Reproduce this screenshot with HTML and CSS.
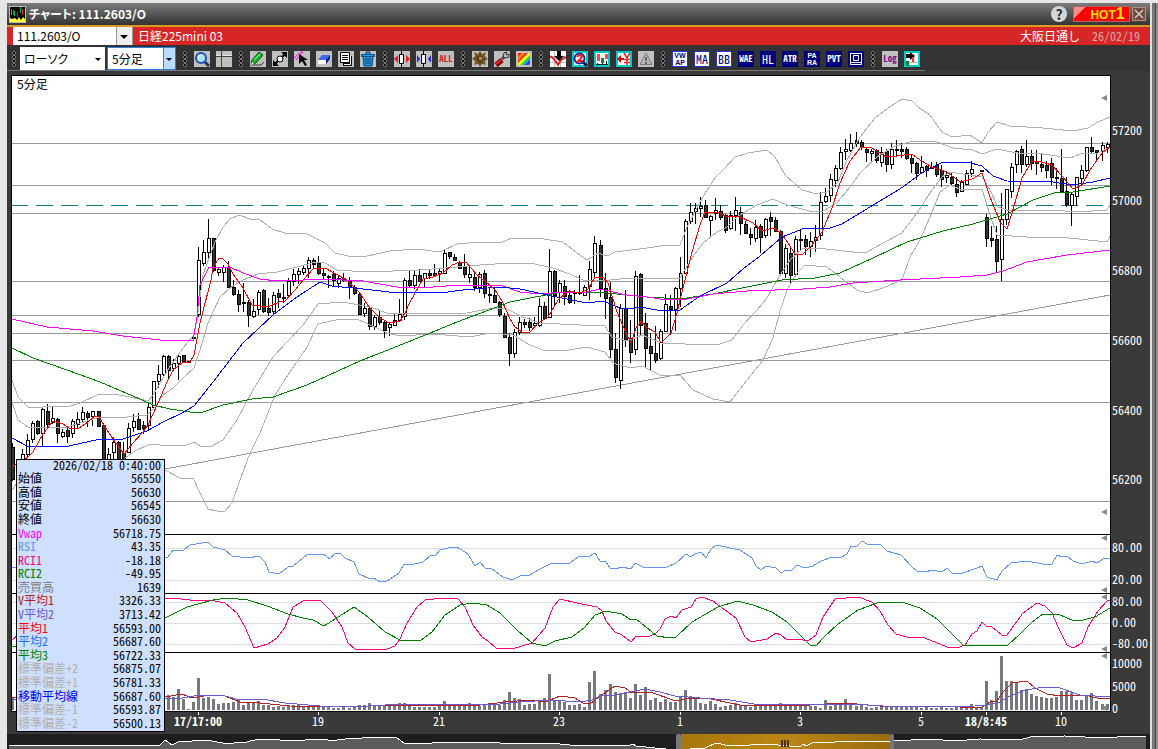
FILE: index.html
```html
<!DOCTYPE html>
<html lang="ja">
<head>
  <meta charset="UTF-8">
  <meta name="viewport" content="width=device-width, initial-scale=1.0">
  <title>チャート: 111.2603/O</title>
  <link rel="stylesheet" href="styles.css">
</head>
<body>
  <main class="window">
    <header class="titlebar">
      <svg class="app-icon" viewBox="0 0 17 17">
        <rect width="17" height="17" fill="#000"/>
        <path d="M2.500 3v6M5.500 5v5M11.500 1v6" stroke="#0c3"/>
        <path d="M4.500 4v5M8.500 6v5M13.500 3v6" stroke="#e22"/>
        <path d="M1 16v-4l2 1 3-1 2 2 2-3 2 3 2-3 2 2v3z" fill="#ff3"/>
        <rect x=".5" y=".5" width="16" height="16" fill="none" stroke="#bbb"/>
      </svg>
      <h1>チャート: 111.2603/O</h1>
      <button class="help" aria-label="ヘルプ">?</button>
      <button class="hot">HOT<b>1</b></button>
      <button class="close" aria-label="閉じる">
        <svg viewBox="0 0 12 12"><path d="M2 2l8 8M10 2l-8 8" stroke="#4a3a34" stroke-width="4"/><path d="M2 2l8 8M10 2l-8 8" stroke="#c9b5ac" stroke-width="2"/></svg>
      </button>
    </header>

    <div class="symbolbar">
      <label class="combo combo-symbol"><select aria-label="銘柄"><option>111.2603/O</option></select></label>
      <span class="name">日経225mini 03</span>
      <span class="session">大阪日通し</span>
      <span class="date">26/02/19</span>
    </div>

    <div class="toolrow">
      <nav class="toolbar">
        <i class="grip first"></i>
        <label class="combo combo-type"><select aria-label="足種"><option>ローソク</option></select></label>
        <label class="combo combo-span"><select aria-label="期間"><option>5分足</option></select></label>
        <i class="grip"></i>
        <div class="group">
          <button aria-label="拡大"><svg viewBox="0 0 16 16"><path d="M10 10l5 5" stroke="#236" stroke-width="3"/><circle cx="7" cy="7" r="5" fill="#aee4ff" stroke="#2350b8" stroke-width="2"/><path d="M4 7a3 3 0 0 1 3-3" stroke="#fff" fill="none"/></svg></button>
          <button aria-label="十字線"><svg viewBox="0 0 16 16"><path d="M0 5.500h16M5.500 0v16" stroke="#354a35"/><path d="M0 4.500h4M7 4.500h9" stroke="#e8e8e8"/></svg></button>
        </div>
        <i class="grip"></i>
        <div class="group">
          <button aria-label="ペン"><svg viewBox="0 0 16 16"><path d="M2 9l7-8 4 3-7 8-5 2z" fill="#1db32d" stroke="#075c10"/><path d="M4 9l6-6" stroke="#9f9"/><path d="M1 14h10l3-3" fill="none" stroke="#333"/><path d="M1 14l1-3 2 2z" fill="#fff"/></svg></button>
          <button aria-label="移動"><svg viewBox="0 0 16 16"><path d="M3 13L13 3" stroke="#000" stroke-width="2"/><path d="M1 15V9l6 6zM15 1v6L9 1z"/><circle cx="8" cy="8" r="3" fill="#fff" stroke="#000"/></svg></button>
          <button aria-label="選択"><svg viewBox="0 0 16 16"><path d="M0 7l8-7M2 9l7-8" stroke="#f0f"/><path d="M5 3v10l3-3 3 5 2-1-3-5h4z"/></svg></button>
          <button aria-label="消しゴム"><svg viewBox="0 0 16 16"><path d="M6 4h8l-4 5H2z" fill="#3b6cf0"/><path d="M14 4v4l-4 5V9z" fill="#001a9e"/><path d="M2 9h8v4H2z" fill="#fff"/></svg></button>
          <button aria-label="コピー"><svg viewBox="0 0 16 16"><path d="M5 5h9v10H5z" fill="#000"/><path d="M2.500 1.500h9v10h-9z" fill="#fff" stroke="#000"/><path d="M4 4.500h6M4 6.500h6M4 8.500h6" stroke="#000"/><path d="M12.500 5v8.500H6" fill="none" stroke="#fff"/></svg></button>
          <button aria-label="削除"><svg viewBox="0 0 16 16"><path d="M3 5h10l-1 10H4z" fill="#1e90d8" stroke="#0a4a80"/><path d="M1.500 3.500h13v2h-13zM6 3V1h4v2" fill="#2ba0e8" stroke="#0a4a80"/><path d="M6 7v6M8 7v6M10 7v6" stroke="#0a4a80"/></svg></button>
        </div>
        <i class="grip"></i>
        <div class="group">
          <button aria-label="間隔を広げる"><svg viewBox="0 0 16 16"><path d="M7.500 0v16" stroke="#000"/><path d="M5.500 3.500h4v9h-4z" fill="#fff" stroke="#000"/><path d="M0 8l4-4v8zM16 8l-4-4v8z" fill="#e02020"/></svg></button>
          <button aria-label="間隔を狭める"><svg viewBox="0 0 16 16"><path d="M7.500 0v16" stroke="#000"/><path d="M5.500 3.500h4v9h-4z" fill="#fff" stroke="#000"/><path d="M4 8L1 4v8zM12 8l3-4v8z" fill="#2828e8"/></svg></button>
          <button class="txt red">ALL</button>
        </div>
        <i class="grip"></i>
        <div class="group">
          <button aria-label="設定"><svg viewBox="0 0 16 16"><path d="M8 0l2 3 4-2-1 4 3 3-3 2 1 4-4-1-2 3-2-3-4 1 1-4-3-2 3-3-1-4 4 2z" fill="#7c5a2a"/><path d="M3 8h10M8 3v10M5 5l6 6M11 5l-6 6" stroke="#2c2418"/><path d="M7 6h3v3H7z" fill="#b58a45"/></svg></button>
          <button aria-label="ツール"><svg viewBox="0 0 16 16"><path d="M8 8l4-4" stroke="#444" stroke-width="3"/><path d="M10 2l-1 3 2 2 4-1 0-3-2 1-1-1 1-2z" fill="#bbb" stroke="#333"/><path d="M2 14l6-5" stroke="#7a0000" stroke-width="5"/><path d="M2 13l5-4" stroke="#f22" stroke-width="2"/></svg></button>
          <button aria-label="配色"><svg viewBox="0 0 16 16"><path d="M2 2h12v12H2z" fill="#f0f"/><path d="M2 14V2h9z" fill="#e22"/><path d="M14 2v3l-9 9H2v-2L12 2z" fill="#ff0"/><path d="M14 4v3l-7 7H4z" fill="#2d2"/><path d="M14 6v4l-4 4H7z" fill="#1af"/><path d="M14 9v3l-2 2H9z" fill="#33f"/><path d="M2 10V6l4-4h3z" fill="#f80"/></svg></button>
        </div>
        <i class="grip"></i>
        <div class="group">
          <button aria-label="予測"><svg viewBox="0 0 16 16"><path d="M0 0h16v16H0z" fill="#fff"/><path d="M4.500 0v16M10.500 0v16M0 5.500h16M0 11.500h16" stroke="#bbb"/><path d="M0 5l4 3 4 6 3-5 5-3" fill="none" stroke="#d22" stroke-width="2"/><path d="M7 0h4v5h3l-5 5-5-5h3z"/></svg></button>
          <button aria-label="検索2"><svg viewBox="0 0 16 16"><path d="M1 1h14v14H1z" fill="#fff" stroke="#0cc" stroke-width="2"/><path d="M11 11l4 4" stroke="#115" stroke-width="3"/><circle cx="7.500" cy="7.500" r="5" fill="#fff" stroke="#229" stroke-width="2"/><path d="M5 6q2-3 5-1 0 2-4 5h5" fill="none" stroke="#e22" stroke-width="2"/></svg></button>
          <button aria-label="比較"><svg viewBox="0 0 16 16"><path d="M1 1h14v14H1z" fill="#fff" stroke="#0cc" stroke-width="2"/><path d="M3 3h3v7H3zM11 3h3v5h-3z" fill="#f44"/><path d="M7 7h3v5H7z" fill="#083"/><path d="M2 13.500h12" stroke="#222"/><path d="M3.500 12v2M8.500 12v2M12.500 10v4" stroke="#222"/></svg></button>
          <button aria-label="発注"><svg viewBox="0 0 16 16"><path d="M1 1h14v14H1z" fill="#fff" stroke="#0cc" stroke-width="2"/><path d="M1 8l4-4v3h3v2H5v3z" fill="#c00"/><path d="M8 2l3 5 3-5M11 7v7M8 8.500h6M8 11.500h6" stroke="#e22" stroke-width="1.500" fill="none"/></svg></button>
          <button aria-label="警告" disabled><svg viewBox="0 0 16 16"><path d="M8 2l6 11.500H2z" fill="#b4b4b4" stroke="#7c7c7c"/><path d="M8 6v4M8 11v2" stroke="#666" stroke-width="2"/></svg></button>
        </div>
        <i class="grip"></i>
        <div class="group">
          <button class="txt on two">VW<br>AP</button>
          <button class="txt on big">MA</button>
          <button class="txt on big">BB</button>
          <button class="txt navy">WAE</button>
          <button class="txt navy big">HL</button>
          <button class="txt navy">ATR</button>
          <button class="txt navy two">PA<br>RA</button>
          <button class="txt navy">PVT</button>
          <button class="txt navy" aria-label="枠"><svg viewBox="0 0 16 16"><path d="M2.500 2.500h11v11h-11zM2.500 11.500h11M5.500 4.500h5v5h-5z" fill="none" stroke="#fff"/></svg></button>
        </div>
        <i class="grip"></i>
        <div class="group">
          <button class="txt purple">Log</button>
          <button aria-label="配置"><svg viewBox="0 0 16 16"><path d="M1 1h14v14H1z" fill="#fff" stroke="#0cc" stroke-width="2"/><path d="M10 3v8M2 11.500h12" stroke="#bbb"/><path d="M2 3h4V1l5 4-5 4V7H2z"/><path d="M8 6h2v5H8z" fill="#e33"/><path d="M2 10h3v5H2z" fill="#083"/></svg></button>
        </div>
      </nav>
    </div>

    <section class="chart">
      <div class="panel price">
        <div class="plot"><svg id="price" viewBox="12 76 1098 458" preserveAspectRatio="none"></svg><span class="caption">5分足</span></div>
        <div class="yaxis" id="priceAxis"></div>
      </div>
      <div class="panel sub">
        <div class="plot"><svg id="rsi" viewBox="12 535 1098 58" preserveAspectRatio="none"></svg></div>
        <div class="yaxis" id="rsiAxis"></div>
      </div>
      <div class="panel sub">
        <div class="plot"><svg id="rci" viewBox="12 594 1098 58" preserveAspectRatio="none"></svg></div>
        <div class="yaxis" id="rciAxis"></div>
      </div>
      <div class="panel sub">
        <div class="plot"><svg id="volume" viewBox="12 653 1098 58" preserveAspectRatio="none"></svg></div>
        <div class="yaxis" id="volumeAxis"></div>
      </div>
      <div class="xaxis" id="timeAxis"></div>

      <table class="readout">
        <thead><tr><th colspan="2">2026/02/18 0:40:00</th></tr></thead>
        <tbody>
          <tr><th>始値</th><td>56550</td></tr>
          <tr><th>高値</th><td>56630</td></tr>
          <tr><th>安値</th><td>56545</td></tr>
          <tr><th>終値</th><td>56630</td></tr>
          <tr class="c-vwap"><th>Vwap</th><td>56718.75</td></tr>
          <tr class="c-rsi"><th>RSI</th><td>43.35</td></tr>
          <tr class="c-rci1"><th>RCI1</th><td>-18.18</td></tr>
          <tr class="c-green"><th>RCI2</th><td>-49.95</td></tr>
          <tr class="c-volume"><th>売買高</th><td>1639</td></tr>
          <tr class="c-v1"><th>V平均1</th><td>3326.33</td></tr>
          <tr class="c-v2"><th>V平均2</th><td>3713.42</td></tr>
          <tr class="c-ma1"><th>平均1</th><td>56593.00</td></tr>
          <tr class="c-ma2"><th>平均2</th><td>56687.60</td></tr>
          <tr class="c-green"><th>平均3</th><td>56722.33</td></tr>
          <tr class="c-band"><th>標準偏差+2</th><td>56875.07</td></tr>
          <tr class="c-band"><th>標準偏差+1</th><td>56781.33</td></tr>
          <tr class="c-mid"><th>移動平均線</th><td>56687.60</td></tr>
          <tr class="c-band"><th>標準偏差-1</th><td>56593.87</td></tr>
          <tr class="c-band"><th>標準偏差-2</th><td>56500.13</td></tr>
        </tbody>
      </table>
    </section>

    <footer class="navigator"><svg id="navigator" viewBox="9 734 1141 15" preserveAspectRatio="none"></svg></footer>
  </main>
  <div class="edge"></div>
  <script src="script.js"></script>
</body>
</html>
```
FILE: styles.css
```css
* { box-sizing: border-box; }
body {
  margin: 0;
  height: 100vh;
  display: flex;
  padding: 3px 0 0 7px;
  overflow: hidden;
  background: #e6e6e6;
  font-family: "Noto Sans CJK JP", sans-serif;
  font-size: 12px;
  line-height: 14px;
}
button, select { font: inherit; }
button { padding: 0; border: 0; flex: none; }
svg { display: block; }

.window {
  flex: 1;
  min-width: 0;
  display: flex;
  flex-direction: column;
  background: #3a3a3a;
}
.edge {
  width: 8px;
  border-left: 2px solid #e0e0e0;
  background: linear-gradient(90deg, #777 0 3px, #444 3px 4px, #909090 4px);
}

/* title bar */
.titlebar {
  height: 24px;
  display: flex;
  align-items: center;
  padding: 0 4px 0 2px;
  background: linear-gradient(#7c7c7c, #565656 50%, #343434);
  border-bottom: 2px solid #d99a22;
  color: #fff;
}
.app-icon { width: 17px; height: 17px; }
h1 { flex: 1; margin: 0 0 0 3px; font-size: 12px; line-height: 16px; font-feature-settings: "palt"; }
.help {
  width: 16px;
  height: 16px;
  border-radius: 50%;
  background: #d2d6d8;
  color: #234;
  font-weight: bold;
  font-size: 14px;
  line-height: 16px;
}
.hot {
  width: 57px;
  height: 16px;
  margin: 0 2px 0 6px;
  padding-left: 12px;
  border: 1px solid #a66;
  background: linear-gradient(135deg, #ff8a80 0 8px, #f00 8px);
  color: #e8e000;
  font-family: "Liberation Sans", sans-serif;
  font-size: 12px;
  font-weight: bold;
  line-height: 14px;
}
.hot b { font-size: 16px; }
.close { width: 14px; height: 14px; background: #80503e; border: 1px solid #b89080; }

/* symbol bar */
.symbolbar {
  height: 18px;
  display: flex;
  align-items: center;
  padding: 0 10px 0 6px;
  background: #d82626;
  color: #fff;
}
.name { flex: 1; padding-left: 5px; }
.session { margin-right: 12px; }
.date { color: #dba8a8; font-feature-settings: "hwid"; }

.combo { position: relative; display: block; height: 100%; }
.combo select {
  display: block;
  width: 100%;
  height: 100%;
  padding: 0 0 0 4px;
  border: 0;
  border-radius: 0;
  outline: 0;
  appearance: none;
  background: #fff;
  color: #000;
  font-feature-settings: "palt";
}
.combo::after {
  content: "";
  position: absolute;
  right: 4px;
  top: 50%;
  margin-top: -1px;
  border: 3px solid transparent;
  border-top-color: #000;
  border-bottom: 0;
  pointer-events: none;
}
.combo-symbol { width: 120px; }
.combo-symbol select { background: linear-gradient(270deg, #999 0 1px, #eee 1px 16px, #999 16px 17px, #fff 17px); }
.combo-symbol::after { right: 5px; border-width: 4px 4px 0; }
.combo-type { width: 85px; margin-right: 2px; }
.combo-span { width: 69px; }
.combo-span select { border: 1px solid #2a80d8; background: linear-gradient(270deg, #b8dcff 0 11px, #2a80d8 11px 12px, #fff 12px); }

/* tool bar */
.toolrow { height: 30px; display: flex; background: #333; border-bottom: 4px solid #3a3a3a; }
.toolbar {
  display: flex;
  align-items: center;
  padding: 2px 5px 0 0;
  border-bottom: 1px solid #777;
}
.toolbar .combo { height: 23px; }
.group { display: flex; gap: 6px; }
.grip {
  width: 6px;
  height: 16px;
  margin: 0 6px;
  background: radial-gradient(circle at 3px 2px, #0c0c0c 1px, #777 1px 2px, transparent 2px) 0 0 / 6px 4px;
}
.grip.first { margin: 0 3px 0 4px; }
.group button { width: 16px; height: 16px; background: #c0c0c0; overflow: hidden; }
.group svg { width: 16px; height: 16px; }
.group .txt {
  font-size: 9px;
  line-height: 16px;
  font-weight: bold;
  font-feature-settings: "hwid";
  text-align: center;
  white-space: nowrap;
}
.group .big { font-size: 12px; font-weight: normal; }
.group .two { font: bold 7px/7px "Liberation Sans", sans-serif; }
.group .red { color: #e01818; }
.group .navy { background: #00007c; color: #fff; }
.group .on { background: #fff; color: #000070; box-shadow: inset 0 0 0 1px #2233dd; }
.group .purple { color: #80008c; }

/* chart */
.chart {
  position: relative;
  flex: 1;
  min-height: 0;
  display: flex;
  flex-direction: column;
  padding-left: 4px;
}
.panel { display: flex; min-height: 0; flex: 59 1 0; }
.price { flex-grow: 460; }
.plot {
  position: relative;
  flex: 1;
  min-width: 0;
  background: #fff;
  border: 1px solid #000;
  border-top: 0;
}
.price .plot { border-top: 1px solid #000; }
.plot svg { width: 100%; height: 100%; }
.plot::before, .plot::after {
  content: "";
  position: absolute;
  right: 3px;
  top: 0;
  border: 3px solid transparent;
  border-left: 0;
  border-right: 6px solid #888;
}
.plot::after { top: auto; bottom: 0; }
.price .plot::before { top: 19px; }
.price .plot::after { bottom: 19px; }
.caption { position: absolute; left: 5px; top: 1px; font-feature-settings: "palt"; }

.yaxis { position: relative; width: 39px; }
.yaxis span {
  position: absolute;
  left: 1px;
  padding-bottom: 2px;
  transform: translateY(-50%);
  color: #fff;
  font-feature-settings: "hwid";
}
.xaxis { position: relative; height: 22px; margin: 0 40px 0 1px; }
.xaxis span {
  position: absolute;
  top: 0;
  padding-top: 2px;
  transform: translateX(-50%);
  color: #fff;
  font-feature-settings: "hwid";
}
.xaxis span::before { content: ""; position: absolute; left: 50%; top: 0; height: 3px; border-left: 1px solid #fff; }
.xaxis .day { font-weight: bold; }

/* value read-out over the chart */
.readout {
  position: absolute;
  left: 9px;
  bottom: 2px;
  width: 149px;
  height: 273px;
  border: 1px solid #000;
  border-collapse: separate;
  border-spacing: 0;
  background: #cfdffe;
  font-feature-settings: "hwid";
  line-height: 9px;
}
.readout th, .readout td { padding: 0 3px 4px 1px; font-weight: normal; text-align: left; white-space: nowrap; }
.readout td, .readout thead th { text-align: right; color: #000; }
.c-vwap { color: #ff00ff; }
.c-rsi { color: #6495ed; }
.c-rci1 { color: #ff0080; }
.c-green { color: #008000; }
.c-volume { color: #808080; }
.c-v1 { color: #b22222; }
.c-v2 { color: #6a5acd; }
.c-ma1 { color: #ff0000; }
.c-ma2 { color: #1e6eff; }
.c-mid { color: #0000ff; }
.c-band { color: #b0b0b0; }

.navigator { height: 15px; padding-left: 2px; background: #1e1e1e; }
.navigator svg { width: 100%; height: 100%; }
```
FILE: script.js
```js
// one row per 5 minute bar: high, body top, body bottom, low, 1 = falling
const candles = [
  [443,447,479,481,1],[462,465,475,480,0],[449,454,462,465,0],[434,440,454,458,0],[421,423,439,443,0],
  [420,421,433,435,1],[407,409,433,446,0],[404,411,424,429,1],[406,418,422,424,0],[418,419,433,443,1],
  [429,432,436,438,0],[426,430,436,443,1],[419,421,433,438,0],[412,419,424,429,0],[407,412,419,423,0],
  [411,413,417,427,1],[411,411,416,426,0],[411,411,426,427,1],[423,425,462,465,1],[448,454,463,465,0],
  [437,442,452,461,0],[441,442,459,462,1],[442,453,458,461,1],[423,428,452,453,0],[414,421,427,432,0],
  [413,419,429,430,1],[421,425,428,434,1],[402,407,425,431,0],[381,381,407,408,0],[365,374,381,388,0],
  [355,356,374,376,0],[355,356,370,379,1],[359,363,368,371,0],[355,356,363,380,0],[355,355,361,362,1],
  [361,361,362,363,1],[337,337,338,338,1],
  [247,260,314,317,0],[240,252,263,266,0],[219,238,252,258,0],[238,238,270,272,1],[267,269,272,276,0],
  [265,267,272,282,0],[261,267,287,288,1],[280,287,294,296,1],[290,294,304,312,1],[283,302,303,312,1],
  [300,302,315,327,1],[299,311,316,318,0],[290,292,309,315,0],[289,290,311,313,1],[298,308,312,316,1],
  [292,295,311,315,0],[289,293,297,308,1],[284,297,298,303,0],[278,281,295,296,0],[269,274,281,286,0],
  [268,271,274,284,0],[265,268,272,275,0],[257,260,268,278,0],[258,260,264,268,1],[256,263,273,275,1],
  [268,273,275,280,1],[275,276,277,288,0],[271,274,280,286,1],[275,278,283,288,0],[273,278,280,282,1],
  [277,280,287,299,1],[285,287,293,295,1],[292,294,314,315,1],[303,308,313,317,0],[306,308,326,330,1],
  [315,317,326,330,0],[311,317,322,325,1],[321,322,330,338,1],[323,324,327,336,0],[314,320,325,326,0],
  [299,314,320,322,0],[278,280,316,320,0],[271,280,285,287,1],[271,275,285,289,0],[269,275,281,282,1],
  [273,273,278,287,0],[269,273,275,279,1],[264,273,275,277,1],[268,271,273,282,0],[250,253,273,274,0],
  [252,252,256,259,1],[254,257,260,261,1],[261,262,268,269,1],[254,267,274,278,1],[265,274,277,283,0],
  [273,277,287,291,1],[272,274,287,293,0],[270,273,293,298,1],[287,294,295,303,0],[288,295,302,303,1],
  [301,302,314,317,1],[313,316,337,338,1],[333,337,353,366,1],[329,332,353,358,0],[317,322,332,335,0],
  [319,322,324,328,1],[318,322,327,331,1],[317,323,325,328,0],[298,306,325,327,0],[302,306,318,320,1],
  [249,271,317,318,0],[270,271,295,305,1],[280,283,292,303,0],[280,286,296,305,1],[290,295,302,304,1],
  [290,292,293,304,0],[275,292,293,295,0],[285,287,295,296,0],[261,269,286,300,0],[236,243,272,277,0],
  [240,245,288,297,1],[273,288,298,319,1],[282,297,349,358,1],[333,349,377,383,1],[304,308,380,389,0],
  [290,308,339,347,1],[320,338,352,363,1],[271,276,349,355,0],[273,274,325,335,1],[313,323,348,367,1],
  [333,346,353,371,1],[326,353,360,363,1],[329,331,358,360,0],[294,304,331,332,0],[295,306,309,335,1],
  [287,288,309,331,0],[257,273,288,307,0],[219,221,273,274,0],[203,212,221,224,0],[203,208,211,224,0],
  [197,206,208,217,0],[200,205,217,218,1],[215,216,220,237,0],[198,210,213,220,0],[205,211,217,220,1],
  [214,215,230,233,1],[211,215,228,230,0],[197,210,215,231,0],[207,212,223,235,1],[221,224,233,234,1],
  [228,234,237,245,1],[220,227,238,242,0],[224,226,237,253,1],[218,219,235,238,0],[212,217,221,236,1],
  [217,220,231,232,1],[230,231,273,274,1],[244,248,273,278,0],[247,253,275,285,1],[236,239,274,276,0],
  [230,239,240,250,0],[235,239,246,255,1],[232,241,246,257,0],[225,237,240,252,0],[192,202,235,240,0],
  [188,196,201,203,0],[174,179,195,202,0],[165,168,180,187,0],[147,152,168,170,0],[139,149,151,160,0],
  [134,143,150,152,0],[132,140,143,147,1],[140,142,147,150,1],[147,149,152,162,1],[149,151,153,162,0],
  [149,150,160,163,1],[147,152,162,167,0],[149,151,164,172,1],[143,149,164,169,0],[140,149,150,156,0],
  [143,149,151,158,1],[147,149,158,160,1],[155,158,163,173,1],[162,163,173,180,1],[156,167,172,173,0],
  [165,166,170,177,1],[162,167,168,168,0],[162,165,174,177,1],[165,170,179,187,1],[171,175,177,183,0],
  [173,177,183,185,1],[177,184,192,197,1],[180,182,191,192,0],[170,173,184,185,0],[161,169,173,177,0],
  null,[170,170,171,171,1],[214,217,238,247,1],[226,238,240,247,1],[226,239,261,272,1],[193,219,259,281,0],
  [189,189,219,225,0],[163,167,191,198,0],[150,151,164,173,0],[146,149,164,173,1],[140,156,164,167,0],
  [150,156,163,170,1],[150,161,163,175,1],[153,164,167,172,1],[161,165,170,178,1],[158,163,177,185,1],
  [168,177,178,189,0],[149,178,191,192,1],[177,191,204,207,1],[192,194,205,226,0],[177,177,196,206,0],
  [165,170,178,185,0],[147,147,170,172,0],[137,147,151,153,1],[150,150,152,162,1],[142,145,151,161,0],
  [142,144,147,153,0]
];

// bar heights, starting at bar -37 like the candles
const volumes = [12,9,6,5,7,9,12,8,6,5,4,7,8,6,5,6,7,10,12,9,8,7,6,9,8,6,5,9,12,14,
  13,15,13,21,11,1,8,
  32,12,13,11,6,7,7,8,11,5,8,8,9,5,5,3,4,3,5,5,5,4,3,3,5,4,3,2,2,3,2,3,5,5,7,4,5,5,5,4,7,7,5,3,3,3,3,3,4,9,5,4,5,
  5,7,5,4,5,5,5,5,10,18,12,11,5,6,6,8,12,36,10,10,8,5,5,6,3,28,39,16,20,26,18,17,18,12,26,15,23,10,12,8,11,8,8,13,20,
  14,11,7,6,9,6,3,4,5,7,5,4,3,4,5,4,6,4,7,4,5,4,5,5,4,4,2,10,4,5,7,11,6,4,5,3,2,3,4,3,3,3,4,3,4,3,2,3,2,2,3,2,2,3,3,
  2,6,3,3,29,10,19,54,29,29,27,20,21,16,14,13,12,12,13,19,19,17,10,10,15,17,9,6,6];

const upper2 = '12,380 18,397 28,407 38,408 48,406 67,407 80,403 97,395 113,394 130,397 148,401 153,395 167,371 183,348 193,336 197,320 203,275 215,242 223,227 230,219 239,215 250,219 260,220 272,229 285,233 307,234 325,243 335,253 348,256 367,256 390,251 417,249 440,252 457,244 480,242 500,243 512,238 537,238 563,242 577,253 587,260 598,253 607,256 615,252 647,248 667,245 680,245 687,227 697,208 705,193 715,178 725,168 735,157 748,153 767,150 775,157 785,175 802,190 817,194 827,192 838,182 847,160 860,137 875,118 888,108 902,99 912,101 918,107 930,115 942,132 952,137 970,135 982,143 988,132 997,122 1010,126 1043,128 1073,131 1088,128 1098,122 1110,117';
const upper1 = '12,402 18,420 28,427 67,427 100,417 127,417 147,415 155,407 163,395 173,388 183,378 194,368 200,350 208,323 220,297 230,288 243,280 258,274 277,272 297,267 315,262 325,263 337,270 367,272 393,271 420,270 457,267 480,265 510,263 530,263 553,268 570,274 583,280 610,280 630,278 667,278 680,278 692,258 703,243 717,232 727,227 738,216 757,205 773,199 787,205 813,212 823,211 837,203 850,187 860,173 877,157 893,147 912,141 937,142 953,148 973,150 982,154 997,149 1017,153 1043,154 1070,158 1080,154 1098,153 1110,147';
const lower1 = '12,490 20,478 120,462 133,452 150,444 170,446 187,445 194,442 200,446 210,447 223,440 237,420 253,390 273,357 303,325 318,304 343,302 370,307 387,313 407,314 467,313 493,308 507,309 523,317 540,323 580,325 605,326 612,337 627,341 642,335 662,343 680,343 690,345 720,344 732,340 743,325 757,310 767,298 777,280 790,260 803,248 817,248 853,252 867,252 883,243 902,233 917,213 930,193 942,177 950,172 982,177 990,190 998,207 1007,210 1053,210 1077,212 1107,210 1110,205';
const lower2 = '165,470 180,478 193,478 200,493 208,509 217,511 225,511 232,503 240,480 250,453 260,433 275,395 290,372 307,347 318,324 340,319 357,319 377,328 387,333 400,336 433,334 470,337 490,333 513,335 530,345 543,350 563,351 587,347 605,352 613,363 630,368 642,366 662,376 680,375 693,390 713,399 730,402 747,380 763,360 773,338 780,311 787,290 797,273 805,265 827,267 840,277 857,290 867,293 883,288 902,280 910,257 920,240 930,217 940,192 950,185 960,189 982,189 990,215 997,235 1027,237 1060,237 1107,242 1110,236';
const vwap = '12,319 47,327 93,331 123,336 160,340 193,341 197,317 200,285 209,267 230,267 243,273 260,279 277,281 303,280 323,279 363,281 397,287 433,287 460,285 500,285 520,292 540,294 563,292 587,292 600,289 613,292 627,295 647,297 667,300 687,299 713,294 747,291 803,289 830,287 853,283 900,280 960,277 987,275 1003,271 1027,262 1067,255 1110,250';
const ma1 = '12,467 28,457 33,452 43,434 53,421 63,424 69,428 79,428 88,422 95,416 99,417 103,424 115,442 124,454 133,443 143,432 148,425 158,403 167,382 173,370 183,362 190,362 194,355 200,323 211,280 213,268 219,258 223,259 228,264 233,274 243,288 252,305 268,307 279,302 285,301 295,290 304,279 314,268 325,268 334,273 347,280 360,293 369,307 379,317 389,323 400,321 404,315 410,302 423,279 433,277 443,273 452,265 460,262 466,262 477,275 485,281 495,290 502,301 510,319 515,327 522,332 530,332 538,323 548,317 558,300 568,291 580,293 588,289 595,277 603,277 608,283 617,312 627,335 631,343 636,328 641,321 646,327 655,332 661,343 671,333 677,313 682,292 692,252 700,225 705,212 718,212 727,217 738,216 753,223 762,231 773,228 780,232 788,243 795,254 803,254 811,246 822,232 832,208 840,183 850,161 861,147 872,148 886,157 897,156 912,154 920,160 932,167 947,172 960,182 972,179 982,173 990,197 1000,222 1007,229 1012,213 1022,178 1032,161 1038,161 1052,165 1062,176 1073,189 1082,185 1090,170 1102,153 1110,147';
const ma2 = '12,438 27,446 69,446 100,439 123,439 147,431 163,422 180,414 194,406 213,382 243,343 273,315 297,297 320,282 332,286 363,289 398,293 418,292 440,293 463,290 500,287 520,289 552,296 587,303 603,301 620,308 630,309 640,307 657,310 680,310 700,296 727,283 743,269 760,256 782,237 805,228 827,229 842,224 870,207 903,187 923,172 943,162 967,162 982,166 993,176 1007,181 1053,182 1072,185 1093,182 1110,178';
const ma3 = '12,348 33,358 67,370 100,382 133,396 153,405 170,409 190,412 203,412 223,405 252,399 273,397 307,385 360,361 413,340 457,322 510,302 530,298 563,292 580,292 607,293 647,297 680,299 713,294 747,287 782,280 815,278 840,273 873,258 907,242 943,231 973,224 1007,214 1033,200 1057,192 1073,192 1110,186';

const rsi = '12,568 30,566 165,557 168,557 173,550 183,551 190,545 208,542 213,547 225,550 232,556 248,558 259,556 265,562 269,572 279,574 288,567 293,566 308,554 323,554 330,559 335,553 340,553 345,558 354,562 359,574 370,579 374,578 380,582 387,581 399,573 404,564 410,565 423,562 431,555 435,556 440,550 452,547 457,547 468,554 475,566 480,562 485,568 492,569 503,577 512,580 520,576 530,575 540,569 550,564 570,563 579,556 590,556 595,553 600,561 606,562 610,568 615,569 622,567 631,569 635,563 643,567 650,568 667,567 676,563 686,554 691,557 695,554 701,552 706,558 711,549 716,545 740,550 752,558 756,566 761,570 766,566 776,568 781,573 786,570 791,571 797,565 805,568 813,566 821,561 832,557 840,558 847,554 851,546 856,547 862,541 867,544 881,545 887,551 901,555 912,567 917,571 925,572 932,570 942,572 947,568 952,573 963,573 977,568 982,566 987,577 997,580 1002,571 1011,563 1027,561 1043,564 1052,564 1057,555 1062,557 1067,556 1073,561 1082,564 1092,561 1097,563 1103,559 1110,558';
const rci1 = '12,640 18,635 165,598 181,599 190,600 210,600 225,603 237,613 245,627 254,648 268,644 277,638 285,627 293,607 305,600 320,600 332,612 342,627 348,643 355,649 387,649 395,646 400,639 407,623 417,607 425,600 443,598 458,599 465,607 473,625 482,637 488,641 496,648 512,649 532,643 545,628 553,607 560,599 577,603 597,607 602,611 606,621 615,632 622,635 631,642 636,636 647,637 655,634 660,629 665,619 671,616 676,618 682,610 691,607 696,599 702,597 713,601 725,610 736,618 745,637 751,642 767,639 776,633 781,635 787,640 797,639 808,641 816,635 823,617 835,599 858,597 872,602 880,611 888,625 896,634 907,637 922,637 935,642 947,647 957,648 965,645 972,634 977,631 982,622 986,626 992,627 1002,635 1007,635 1012,628 1023,613 1037,603 1045,606 1052,613 1058,627 1067,645 1073,648 1082,643 1088,627 1098,611 1108,600 1110,600';
const rci2 = '12,647 165,618 187,607 198,604 213,600 228,598 248,600 267,606 288,614 303,618 313,620 324,626 335,619 354,607 368,617 385,632 400,640 420,641 432,632 445,615 460,605 472,603 487,605 500,613 517,630 532,643 545,646 555,641 572,637 585,627 595,615 606,611 622,614 631,620 636,619 657,636 670,638 676,637 692,622 718,607 737,601 753,605 772,612 787,622 802,637 810,645 816,646 823,638 838,624 858,610 877,603 902,602 920,608 937,619 952,634 963,645 975,646 1008,645 1020,634 1032,622 1043,614 1060,615 1072,620 1083,620 1095,617 1110,608';
const vol1 = '12,698 165,697 182,694 192,698 210,695 225,696 240,702 260,703 290,706 340,707 355,707 385,705 480,705 505,702 530,700 545,702 560,696 575,698 583,703 590,704 600,696 615,686 625,688 632,693 650,692 676,701 690,698 707,698 725,702 740,705 780,706 810,705 845,703 880,706 915,706 960,707 982,707 990,702 997,701 1003,692 1012,683 1027,681 1035,688 1047,694 1060,696 1085,695 1097,698 1110,699';
const vol2 = '12,699 165,699 182,698 200,695 225,696 240,700 262,699 285,703 320,706 370,706 400,704 490,705 520,702 550,700 580,702 592,700 600,696 615,695 630,692 645,689 660,692 675,696 700,698 730,700 760,705 850,704 900,707 975,706 985,705 1000,702 1010,696 1025,690 1045,687 1060,688 1080,695 1110,697';
const overview = '9,745 160,745 165,740 172,745 180,741 192,741 205,740 212,741 228,744 240,742 244,743 250,741 260,739 275,739 285,741 305,740 310,739 318,740 326,739 330,741 345,739 352,738 362,738 375,737 390,738 396,737 404,743 425,744 440,742 455,743 480,742 500,743 550,743 570,745 630,745 633,744 636,746 655,748 676,750 705,748 716,743 730,746 750,745 765,744 790,746 800,747 803,744 806,746 812,743 835,742 845,741 860,741 880,742 893,741 930,739 955,741 980,739 1020,740 1030,737 1065,736 1085,737 1110,738 1125,736 1146,737';

const barX = i => Math.floor(198.4 + 5.02 * (i - 37));
const line = (points, color) => `<polyline points="${points}" fill="none" stroke="${color}" shape-rendering="crispEdges"/>`;
const level = (y, color) => `<path d="M12 ${y + 0.5}H1110" stroke="${color}" shape-rendering="crispEdges"/>`;

function drawPrice() {
  let out = [143, 185, 213, 281, 315, 333, 360, 402, 501].map(y => level(y, '#999')).join('');
  out += '<path d="M11 205.5H1110" stroke="#0a8080" stroke-dasharray="17 8" shape-rendering="crispEdges"/>';
  out += line('165,469 1110,295', '#999');
  candles.forEach((c, i) => {
    if (!c) return;
    const x = barX(i);
    const [high, top, bottom, low, down] = c;
    out += `<path d="M${x + 0.5} ${high}V${low}" stroke="#000" shape-rendering="crispEdges"/>`;
    out += `<rect x="${x - 0.5}" y="${top + 0.5}" width="3" height="${Math.max(bottom - top, 0.1)}" fill="${down ? '#333' : '#fff'}" stroke="#000" shape-rendering="crispEdges"/>`;
  });
  out += [upper2, upper1, lower1, lower2].map(p => line(p, '#b0b0b0')).join('');
  out += line(ma3, '#008000') + line(vwap, '#f0f') + line(ma2, '#00f') + line(ma1, '#f00');
  document.getElementById('price').innerHTML = out;
}

function drawOscillators() {
  document.getElementById('rsi').innerHTML = level(548, '#ddd') + level(580, '#ddd') + line(rsi, '#6495ed');
  document.getElementById('rci').innerHTML = [602, 623, 644].map(y => level(y, '#ddd')).join('') + line(rci1, '#ff0080') + line(rci2, '#008000');
}

function drawVolume() {
  const bars = volumes.map((h, i) => `<rect x="${barX(i) - 1}" y="${710 - h}" width="3" height="${h}" fill="#77777f"/>`).join('');
  document.getElementById('volume').innerHTML = bars + line(vol1, '#b22222') + line(vol2, '#6a5acd');
}

function drawNavigator() {
  document.getElementById('navigator').innerHTML = `
    <defs><linearGradient id="gold" x1="0" x2="1"><stop offset="0" stop-color="#a8780c"/><stop offset=".5" stop-color="#bb8614"/><stop offset="1" stop-color="#9a6c10"/></linearGradient></defs>
    <polygon points="9,750 ${overview} 1146,750" fill="#5c5c5c"/>
    <rect x="681" y="734" width="209" height="15" fill="url(#gold)"/>
    ${line(overview, '#fff')}
    <rect x="676" y="734" width="5" height="16" rx="2" fill="#777"/>
    <rect x="890" y="734" width="4" height="16" rx="2" fill="#777"/>
    <path d="M782 740v7M785 740v7M788 740v7" stroke="#4a3506" stroke-width="2"/>`;
}

// labels: [text, y], placed as a share of the panel height
function drawAxis(id, top, height, labels) {
  document.getElementById(id).innerHTML = labels
    .map(([text, y]) => `<span style="top:${(y - top) / height * 100}%">${text}</span>`).join('');
}

function drawTimes() {
  const times = [['17/17:00', 198, 1], ['19', 318], ['21', 439], ['23', 559], ['1', 680], ['3', 800], ['5', 921], ['18/8:45', 986, 1], ['10', 1061]];
  document.getElementById('timeAxis').innerHTML = times
    .map(([text, x, day]) => `<span class="${day ? 'day' : ''}" style="left:${(x - 12) / 1098 * 100}%">${text}</span>`).join('');
}

drawPrice();
drawOscillators();
drawVolume();
drawNavigator();
drawAxis('priceAxis', 75, 460, [['57200', 131], ['57000', 201], ['56800', 271], ['56600', 341], ['56400', 411], ['56200', 480]]);
drawAxis('rsiAxis', 535, 59, [['80.00', 548], ['20.00', 580]]);
drawAxis('rciAxis', 594, 59, [['80.00', 602], ['0.00', 623], ['-80.00', 644]]);
drawAxis('volumeAxis', 653, 59, [['10000', 664], ['5000', 687], ['0', 709]]);
drawTimes();
```
